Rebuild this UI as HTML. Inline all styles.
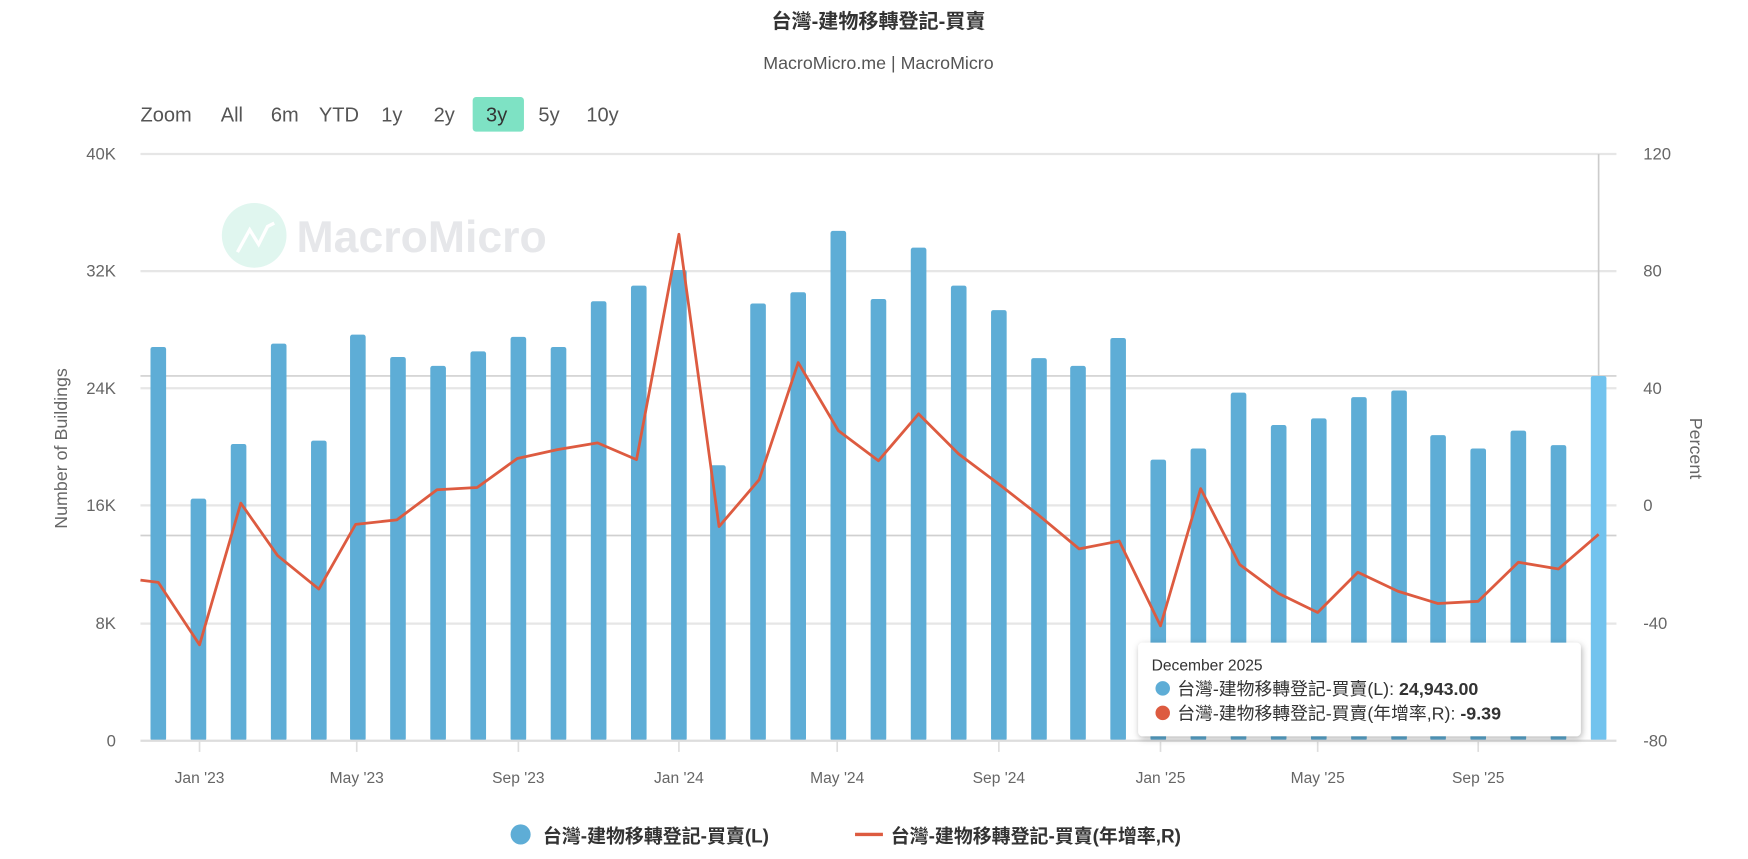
<!DOCTYPE html>
<html><head><meta charset="utf-8"><style>
html,body{margin:0;padding:0;background:#fff;}
svg{display:block;font-family:"Liberation Sans","Noto Sans CJK TC",sans-serif;}
</style></head><body>
<svg width="1748" height="859" viewBox="0 0 1568 770" preserveAspectRatio="none">
<defs><filter id="sh" x="-10%" y="-20%" width="120%" height="150%"><feDropShadow dx="1" dy="2" stdDeviation="3" flood-color="#000" flood-opacity="0.3"/></filter></defs>
<text x="788" y="25" text-anchor="middle" font-size="18" font-weight="bold" fill="#333">台灣-建物移轉登記-買賣</text>
<text x="788" y="62" text-anchor="middle" font-size="16" fill="#555">MacroMicro.me | MacroMicro</text>
<g font-size="18" fill="#555">
<rect x="424" y="87" width="46" height="31" rx="3" fill="#7ee2c4"/>
<text x="126" y="109">Zoom</text><text x="198" y="109">All</text><text x="243" y="109">6m</text><text x="286" y="109">YTD</text><text x="342" y="109">1y</text><text x="389" y="109">2y</text><text x="436" y="109" fill="#333">3y</text><text x="483" y="109">5y</text><text x="526" y="109">10y</text>
</g>
<circle cx="228" cy="211" r="29" fill="#e0f6ef"/>
<path d="M213 226 L224 206 L232 219 L240 203 L246 200" stroke="#fff" stroke-width="3" fill="none"/>
<text x="266" y="226" font-size="40" font-weight="bold" fill="#e6e7ea">MacroMicro</text>
<g stroke="#e6e6e6" stroke-width="2">
<line x1="126" y1="138" x2="1450" y2="138"/><line x1="126" y1="243" x2="1450" y2="243"/><line x1="126" y1="348" x2="1450" y2="348"/><line x1="126" y1="453" x2="1450" y2="453"/><line x1="126" y1="559" x2="1450" y2="559"/>
</g>
<g stroke="#d0d0d0" stroke-width="1.5"><line x1="126" y1="337" x2="1450" y2="337"/><line x1="126" y1="480" x2="1450" y2="480"/></g>
<line x1="1434" y1="138" x2="1434" y2="664" stroke="#ccc" stroke-width="1.5"/>
<g fill="#5eadd6">
<rect x="135" y="311" width="14" height="353" rx="2"/><rect x="171" y="447" width="14" height="217" rx="2"/><rect x="207" y="398" width="14" height="266" rx="2"/><rect x="243" y="308" width="14" height="356" rx="2"/><rect x="279" y="395" width="14" height="269" rx="2"/><rect x="314" y="300" width="14" height="364" rx="2"/><rect x="350" y="320" width="14" height="344" rx="2"/><rect x="386" y="328" width="14" height="336" rx="2"/><rect x="422" y="315" width="14" height="349" rx="2"/><rect x="458" y="302" width="14" height="362" rx="2"/><rect x="494" y="311" width="14" height="353" rx="2"/><rect x="530" y="270" width="14" height="394" rx="2"/><rect x="566" y="256" width="14" height="408" rx="2"/><rect x="602" y="242" width="14" height="422" rx="2"/><rect x="637" y="417" width="14" height="247" rx="2"/><rect x="673" y="272" width="14" height="392" rx="2"/><rect x="709" y="262" width="14" height="402" rx="2"/><rect x="745" y="207" width="14" height="457" rx="2"/><rect x="781" y="268" width="14" height="396" rx="2"/><rect x="817" y="222" width="14" height="442" rx="2"/><rect x="853" y="256" width="14" height="408" rx="2"/><rect x="889" y="278" width="14" height="386" rx="2"/><rect x="925" y="321" width="14" height="343" rx="2"/><rect x="960" y="328" width="14" height="336" rx="2"/><rect x="996" y="303" width="14" height="361" rx="2"/><rect x="1032" y="412" width="14" height="252" rx="2"/><rect x="1068" y="402" width="14" height="262" rx="2"/><rect x="1104" y="352" width="14" height="312" rx="2"/><rect x="1140" y="381" width="14" height="283" rx="2"/><rect x="1176" y="375" width="14" height="289" rx="2"/><rect x="1212" y="356" width="14" height="308" rx="2"/><rect x="1248" y="350" width="14" height="314" rx="2"/><rect x="1283" y="390" width="14" height="274" rx="2"/><rect x="1319" y="402" width="14" height="262" rx="2"/><rect x="1355" y="386" width="14" height="278" rx="2"/><rect x="1391" y="399" width="14" height="265" rx="2"/>
<rect x="1427" y="337" width="14" height="327" rx="2" fill="#72c3ee"/>
</g>
<polyline fill="none" stroke="#dd5b40" stroke-width="2.5" stroke-linejoin="round" points="126,520 142,522 179,578 216,451 249,498 286,528 319,470 356,466 392,439 428,437 464,411 500,403 536,397 571,412 609,210 645,472 681,430 716,325 752,386 788,413 824,371 860,407 896,434 932,462 968,492 1004,485 1041,561 1077,438 1112,506 1147,532 1182,549 1218,513 1254,530 1290,541 1326,539 1362,504 1398,510 1434,479"/>
<line x1="126" y1="664" x2="1450" y2="664" stroke="#ddd" stroke-width="2"/>
<g stroke="#ddd" stroke-width="1.5"><line x1="179" y1="664" x2="179" y2="674"/><line x1="320" y1="664" x2="320" y2="674"/><line x1="465" y1="664" x2="465" y2="674"/><line x1="609" y1="664" x2="609" y2="674"/><line x1="751" y1="664" x2="751" y2="674"/><line x1="896" y1="664" x2="896" y2="674"/><line x1="1041" y1="664" x2="1041" y2="674"/><line x1="1182" y1="664" x2="1182" y2="674"/><line x1="1326" y1="664" x2="1326" y2="674"/></g>
<g font-size="15" fill="#666" text-anchor="end">
<text x="104" y="143">40K</text><text x="104" y="248">32K</text><text x="104" y="353">24K</text><text x="104" y="458">16K</text><text x="104" y="564">8K</text><text x="104" y="669">0</text>
</g>
<g font-size="15" fill="#666">
<text x="1474" y="143">120</text><text x="1474" y="248">80</text><text x="1474" y="353">40</text><text x="1474" y="458">0</text><text x="1474" y="564">-40</text><text x="1474" y="669">-80</text>
</g>
<g font-size="14" fill="#666" text-anchor="middle">
<text x="179" y="702">Jan '23</text><text x="320" y="702">May '23</text><text x="465" y="702">Sep '23</text><text x="609" y="702">Jan '24</text><text x="751" y="702">May '24</text><text x="896" y="702">Sep '24</text><text x="1041" y="702">Jan '25</text><text x="1182" y="702">May '25</text><text x="1326" y="702">Sep '25</text>
</g>
<text transform="translate(60,402) rotate(-90)" text-anchor="middle" font-size="16" fill="#666">Number of Buildings</text>
<text transform="translate(1516,402) rotate(90)" text-anchor="middle" font-size="16" fill="#666">Percent</text>
<rect x="1021" y="576" width="397" height="84" rx="4" fill="#fff" filter="url(#sh)"/>
<text x="1033" y="601" font-size="14" fill="#333">December 2025</text>
<circle cx="1043" cy="617" r="6.5" fill="#5eadd6"/>
<text x="1056" y="623" font-size="16" fill="#333">台灣-建物移轉登記-買賣(L): <tspan font-weight="bold">24,943.00</tspan></text>
<circle cx="1043" cy="639" r="6.5" fill="#dd5b40"/>
<text x="1056" y="645" font-size="16" fill="#333">台灣-建物移轉登記-買賣(年增率,R): <tspan font-weight="bold">-9.39</tspan></text>
<circle cx="467" cy="748" r="9" fill="#5eadd6"/>
<text x="487" y="755" font-size="17" font-weight="bold" fill="#333">台灣-建物移轉登記-買賣(L)</text>
<line x1="767" y1="748" x2="792" y2="748" stroke="#dd5b40" stroke-width="3"/>
<text x="799" y="755" font-size="17" font-weight="bold" fill="#333">台灣-建物移轉登記-買賣(年增率,R)</text>
</svg>
</body></html>
